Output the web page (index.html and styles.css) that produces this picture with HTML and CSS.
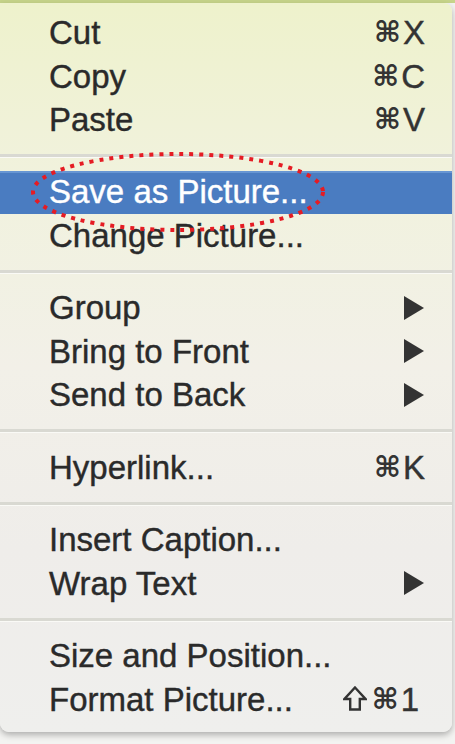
FILE: index.html
```html
<!DOCTYPE html>
<html lang="en">
<head>
    <meta charset="UTF-8">
    <meta name="viewport" content="width=device-width, initial-scale=1.0">
    <title>Picture Context Menu</title>
    <link rel="stylesheet" href="styles.css">
</head>
<body>
    <div class="menu">
        <div class="item"><span class="label">Cut</span><span class="key"><span class="cmd">⌘</span>X</span></div>
        <div class="item"><span class="label">Copy</span><span class="key"><span class="cmd">⌘</span>C</span></div>
        <div class="item"><span class="label">Paste</span><span class="key"><span class="cmd">⌘</span>V</span></div>
        <div class="sep"></div>
        <div class="item active"><span class="label">Save as Picture...</span></div>
        <div class="item"><span class="label">Change Picture...</span></div>
        <div class="sep"></div>
        <div class="item"><span class="label">Group</span><span class="arrow"></span></div>
        <div class="item"><span class="label">Bring to Front</span><span class="arrow"></span></div>
        <div class="item"><span class="label">Send to Back</span><span class="arrow"></span></div>
        <div class="sep"></div>
        <div class="item"><span class="label">Hyperlink...</span><span class="key"><span class="cmd">⌘</span>K</span></div>
        <div class="sep"></div>
        <div class="item"><span class="label">Insert Caption...</span></div>
        <div class="item"><span class="label">Wrap Text</span><span class="arrow"></span></div>
        <div class="sep"></div>
        <div class="item"><span class="label">Size and Position...</span></div>
        <div class="item">
            <span class="label">Format Picture...</span>
            <span class="key key-shift">
                <svg class="shift" width="24" height="25" viewBox="0 0 24 25">
                    <path d="M12 1.5 L22.5 13 H16.8 V23.5 H7.2 V13 H1.5 Z" fill="none" stroke="#333" stroke-width="2.4"/>
                </svg><span class="cmd">⌘</span>1</span>
        </div>

        <!-- hand-drawn annotation over the highlighted item -->
        <svg class="mark" width="300" height="84" viewBox="0 0 300 84">
            <ellipse cx="149" cy="41" rx="145" ry="38" fill="none" stroke="#e51c24" stroke-width="4" stroke-dasharray="4 6"/>
        </svg>
    </div>
</body>
</html>
```

FILE: styles.css
```css
body {
    margin: 0;
    height: 744px;
    overflow: hidden;
    background: linear-gradient(to bottom, #c6d48a 0, #c6d48a 3px, #f3f3f1 3px, #f3f3f1 100%);
    font-family: "Liberation Sans", Arial, sans-serif;
}
.menu {
    position: relative;
    width: 452px;
    margin-top: 3px;
    padding: 8px 0 11px;
    border-radius: 0 8px 9px 9px;
    background: linear-gradient(to bottom, #eef2cc 0%, #f1f2de 25%, #f2f0e8 50%, #efedea 75%, #efefed 100%);
    box-shadow: 0 3px 6px rgba(0, 0, 0, 0.28);
    color: #2a2a2a;
}
.item {
    display: flex;
    align-items: center;
    justify-content: space-between;
    height: 43.5px;
    padding: 0 27px 0 49px;
    font-size: 33px;
    line-height: 43.5px;
    -webkit-text-stroke: 0.4px currentColor;
}
.item.active {
    height: 43px;
    background: #4a7cc1;
    box-shadow: inset 0 2px 0 #6796d3;
    color: #fff;
}
.key {
    display: flex;
    align-items: center;
    gap: 2px;
    color: #333;
}
.key-shift {
    margin-right: 6px;
}
.cmd {
    font-family: "DejaVu Sans", sans-serif;
    font-size: 29px;
    font-weight: bold;
    -webkit-text-stroke: 0;
}
.shift {
    margin: 0 3px 2px 0;
}
.arrow {
    width: 0;
    height: 0;
    margin-right: 1px;
    border-top: 12px solid transparent;
    border-bottom: 12px solid transparent;
    border-left: 20px solid #333;
}
.sep {
    height: 29px;
    display: flex;
    flex-direction: column;
    justify-content: center;
}
.sep::before {
    content: "";
    height: 3px;
    background: #d9d9d2;
    border-bottom: 1px solid #fafaf6;
}
.mark {
    position: absolute;
    left: 29px;
    top: 148px;
}
```
